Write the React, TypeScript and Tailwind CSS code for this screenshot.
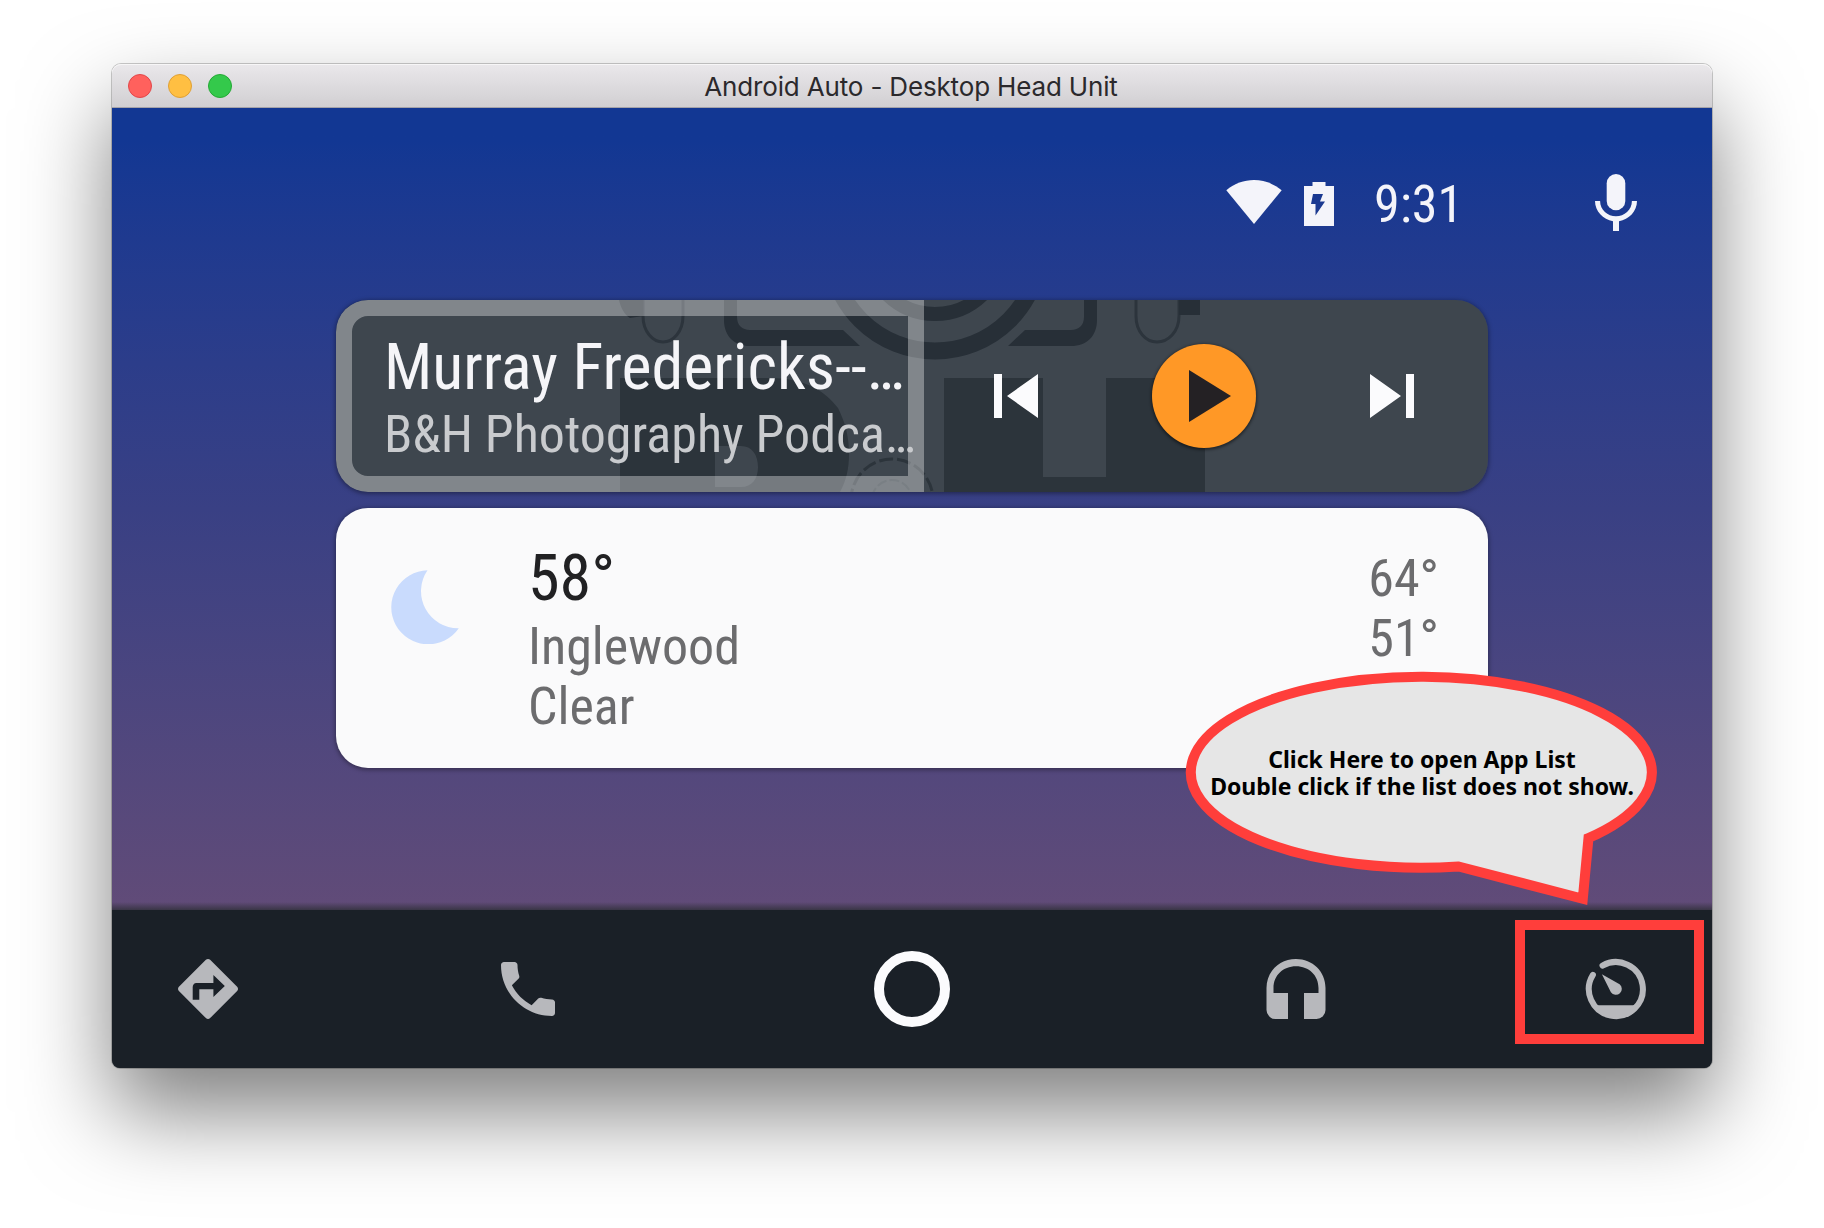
import type { ReactNode } from "react";

function TitleBar() {
  return (
    <div className="relative flex h-11 items-center justify-center rounded-t-[9px] border-b border-[#a5a3a9] bg-linear-to-b from-[#eae8eb] to-[#d1cfd2] shadow-[inset_0_1px_0_#f7f6f7]">
      <div className="absolute left-4 flex gap-4">
        <span className="size-6 rounded-full border border-[#e2474a] bg-[#ff615d]" />
        <span className="size-6 rounded-full border border-[#dfa035] bg-[#ffbf42]" />
        <span className="size-6 rounded-full border border-[#24a935] bg-[#34c94b]" />
      </div>
      <span className="pt-0.5 pr-0.5 font-[Inter,sans-serif] text-[26px] leading-none tracking-[-0.16px] text-[#2b292c]">
        Android Auto - Desktop Head Unit
      </span>
    </div>
  );
}

function StatusBar() {
  return (
    <div className="flex h-[192px] items-start justify-end pt-[60px] pr-[60px]">
      <div className="flex h-[72px] items-center text-[#f4f4fa]">
        <svg className="mr-[22px] mb-1 h-11 w-14" viewBox="0 0 56 44" fill="currentColor">
          <path d="M28 44 .3 10.2C8.500 3.500 18 0 28 0s19.500 3.500 27.700 10.200z" />
        </svg>
        <svg className="mr-10 h-11 w-[30px]" viewBox="0 0 30 44" fill="currentColor" fillRule="evenodd">
          <path d="M8.500 0h13v4H30v40H0V4h8.500zM9 12h10l-3 7.500h5L11.500 33.500V22H7z" />
        </svg>
        <span className="w-[206px] pt-0.5 text-[52px] leading-[60px]">9:31</span>
        <svg className="size-[72px]" viewBox="0 0 24 24" fill="currentColor">
          <rect x="8.900" y="2" width="6.200" height="12.100" rx="3.100" />
          <path d="M17.300 11c0 3-2.540 5.100-5.300 5.100S6.700 14 6.700 11H5c0 3.410 2.720 6.230 6 6.720V21h2v-3.280c3.280-.48 6-3.300 6-6.720z" />
        </svg>
      </div>
    </div>
  );
}

function PodcastArt() {
  return (
    <svg className="absolute inset-0 h-full w-full" viewBox="336 300 1152 192" fill="none">
      <g stroke="#272f37">
        <circle cx="935" cy="246" r="105" strokeWidth="17" />
        <circle cx="935" cy="246" r="68" strokeWidth="14" />
        <g strokeWidth="3" stroke="#2c343c">
          <path d="M643 300v16c0 16 10 26 20 26s20-10 20-26v-16" />
          <path d="M1136 300v16c0 16 10 26 21 26s22-10 22-26v-16" />
        </g>
      </g>
      <g fill="#272f37">
        <path d="M724 300h13v17c0 8 5 13 13 13h93l17 16H750c-16 0-26-10-26-26z" />
        <path d="M1097 300h-13v17c0 8-5 13-13 13h-46l-17 16h63c16 0 26-10 26-26z" />
        <path d="M619 300h24v16l-13 2c-6-4-9-10-11-18zM1179 300h21v15h-21z" />
      </g>
      <g fill="#2c343b">
        <path
          fillRule="evenodd"
          d="M620 378h150c34 0 54 12 68 30 8 16 11 30 11 46 0 15-3 27-9 38H620zM715 446v41h26c11 0 17-8 17-20s-6-21-17-21z"
        />
        <path d="M944 378h99v99h63v-99h99v114H944z" />
      </g>
      <g stroke="#2c343b" strokeWidth="3">
        <circle cx="892" cy="500" r="41" strokeDasharray="14 4" />
        <circle cx="892" cy="500" r="20" strokeDasharray="10 3" strokeWidth="2" opacity="0.6" />
      </g>
    </svg>
  );
}

function MediaCard() {
  return (
    <section className="relative flex h-[192px] w-[1152px] overflow-hidden rounded-[32px] bg-[#3e464e]">
      <PodcastArt />
      <div className="relative w-[586px] pt-8 pl-12">
        <div className="absolute top-0 left-0 h-[192px] w-[588px] rounded-l-[32px] border-[16px] border-white/35" />
        <h2 className="relative text-[64px] leading-[72px] whitespace-nowrap text-[#f5f5f8]">Murray Fredericks--…</h2>
        <p className="relative mt-px text-[52px] leading-[60px] whitespace-nowrap text-[#c9cbce]">
          B&amp;H Photography Podca…
        </p>
      </div>
      <div className="relative grid w-[564px] grid-cols-3 place-items-center">
        <svg className="h-11 w-11" viewBox="0 0 44 44" fill="#fbfbfd">
          <path d="M0 0h8v44H0zM44 0v44L13 22z" />
        </svg>
        <div className="grid size-[104px] place-items-center rounded-full bg-[#ff9826] shadow-[0_1px_3px_1px_rgba(0,0,0,0.45)]">
          <svg className="ml-3 h-[52px] w-[42px]" viewBox="0 0 42 52" fill="#242124">
            <path d="M0 0v52l42-26z" />
          </svg>
        </div>
        <svg className="h-11 w-11" viewBox="0 0 44 44" fill="#fbfbfd">
          <path d="M36 0h8v44h-8zM0 0v44l31-22z" />
        </svg>
      </div>
    </section>
  );
}

function WeatherCard() {
  return (
    <section className="mt-4 flex h-[260px] w-[1152px] rounded-[32px] bg-[#fafafb] pr-[49px] text-[52px] leading-[60px] text-[#6c6c6e] shadow-[0_1px_4px_1px_rgba(0,0,0,0.35)]">
      <svg className="mt-[62px] ml-[55px] h-[74px] w-[68px]" viewBox="390 570 68 74" fill="#c9dbfd">
        <path d="M426.500 570.300a37 37 0 1 0 31.300 57.900A37 37 0 0 1 426.500 570.300z" />
      </svg>
      <div className="ml-[69px] flex-1 pt-[35px]">
        <p className="mb-0.5 text-[64px] leading-[72px] text-[#212123]">58°</p>
        <p>Inglewood</p>
        <p>Clear</p>
      </div>
      <div className="pt-[41px] text-right">
        <p>64°</p>
        <p>51°</p>
      </div>
    </section>
  );
}

function NavCell({ className, children }: { className: string; children: ReactNode }) {
  return <div className={`flex items-center justify-center ${className}`}>{children}</div>;
}

function NavBar() {
  return (
    <nav className="relative flex h-[158px] rounded-b-lg bg-[#1a2027] text-[#b7b8bc]">
      <div className="absolute -top-2 left-0 h-2 w-full bg-linear-to-b from-transparent to-[#30303a]/80" />
      <NavCell className="w-[192px]">
        <svg className="size-[72px]" viewBox="0 0 24 24" fill="currentColor">
          <path d="M21.710 11.290l-9-9c-.39-.39-1.020-.39-1.410 0l-9 9c-.39.39-.39 1.020 0 1.410l9 9c.39.39 1.020.39 1.410 0l9-9c.39-.38.39-1.010 0-1.410zM13.800 14.700V12.100H9.100v3.500H6.900v-4.200c0-.8.5-1.400 1.200-1.400h5.700V7.300l3.800 3.700z" />
        </svg>
      </NavCell>
      <NavCell className="w-[448px]">
        <svg className="size-[72px]" viewBox="0 0 24 24" fill="currentColor">
          <path d="M6.620 10.790c1.440 2.830 3.760 5.140 6.590 6.590l2.200-2.200c.27-.27.67-.36 1.020-.24 1.120.37 2.330.57 3.570.57.55 0 1 .45 1 1V20c0 .55-.45 1-1 1-9.390 0-17-7.610-17-17 0-.55.45-1 1-1h3.500c.55 0 1 .45 1 1 0 1.250.2 2.450.57 3.570.11.35.03.74-.25 1.020z" />
        </svg>
      </NavCell>
      <NavCell className="w-[320px]">
        <span className="size-[76px] rounded-full border-[10px] border-[#fbfbfd]" />
      </NavCell>
      <NavCell className="w-[448px]">
        <svg className="size-[60px]" viewBox="0 0 60 60" fill="currentColor">
          <path d="M30 0C13.500 0 .5 12.500.5 29v22a9 9 0 0 0 9 9H22V34H7.500v-5C7.500 16.500 17 7.300 30 7.300S52.500 16.500 52.500 29v5H38v26h12.500a9 9 0 0 0 9-9V29C59.500 12.500 46.500 0 30 0z" />
        </svg>
      </NavCell>
      <NavCell className="w-[192px]">
        <svg className="size-[72px]" viewBox="0 0 24 24" fill="currentColor">
          <path
            d="M7.500 4.210A9 9 0 1 1 4.300 7.300"
            fill="none"
            stroke="currentColor"
            strokeWidth="2"
            strokeLinecap="round"
          />
          <path d="M5 17.400h14C17.500 20 15 21.500 12 21.500S6.500 20 5 17.400z" />
          <path d="M7.300 7.100 13.200 10.400a2 2 0 1 1-2.900 2.700z" />
        </svg>
      </NavCell>
    </nav>
  );
}

function Callout() {
  return (
    <div className="absolute top-[662px] left-[1176px] h-[252px] w-[492px]">
      <svg className="absolute inset-0 h-full w-full" viewBox="1176 662 492 252">
        <path
          d="M1458.600 866.500 1582.800 898.800 1588.500 838A230.500 95.500 0 1 0 1458.600 866.500z"
          fill="#e6e6e6"
          stroke="#ff3e3b"
          strokeWidth="10"
        />
      </svg>
      <p className="relative pt-[84px] text-center font-['Noto_Sans',sans-serif] text-[23px] leading-[27px] font-bold text-black">
        Click Here to open App List
        <br />
        Double click if the list does not show.
      </p>
    </div>
  );
}

export default function App() {
  return (
    <main className="relative h-[1228px] w-[1824px] overflow-hidden bg-white pt-16 pl-28">
      <div className="w-[1600px] rounded-t-[9px] rounded-b-lg shadow-[0_0_0_1px_rgba(0,0,0,0.2),0_44px_88px_rgba(0,0,0,0.5)]">
        <TitleBar />
        <div className="flex h-[960px] flex-col rounded-b-lg bg-[#1a2027] font-[Roboto,sans-serif] [font-stretch:75%]">
          <div className="flex-1 bg-linear-to-b from-[#123793] from-4% via-[#394084] via-50% to-[#614b78]">
            <StatusBar />
            <div className="flex flex-col items-center">
              <div className="rounded-[32px] shadow-[0_1px_4px_1px_rgba(0,0,0,0.35)]">
                <MediaCard />
              </div>
              <WeatherCard />
            </div>
          </div>
          <NavBar />
        </div>
      </div>
      <div className="absolute top-[920px] left-[1515px] h-[124px] w-[189px] border-[10px] border-[#ff3e3b]" />
      <Callout />
    </main>
  );
}
